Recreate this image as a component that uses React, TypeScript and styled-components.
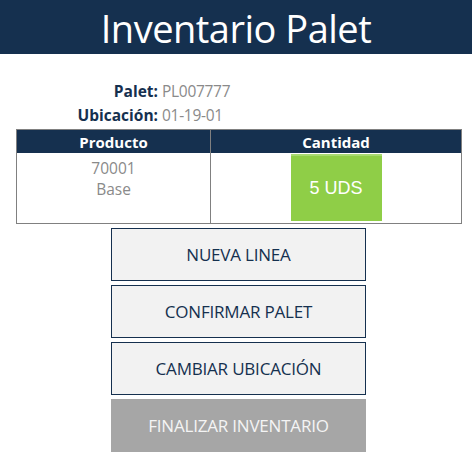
import styled, { createGlobalStyle } from 'styled-components'

const GlobalStyle = createGlobalStyle`
  body {
    margin: 0;
    background: #ffffff;
    font-family: 'Open Sans', 'Noto Sans', sans-serif;
  }
`

const Cabecera = styled.header`
  height: 54px;
  background-color: #15304f;
  color: #ffffff;
  display: flex;
  align-items: center;
  justify-content: center;
`

const Titulo = styled.h1`
  margin: 0;
  font-size: 38px;
  font-weight: 400;
  letter-spacing: -0.5px;
  line-height: 1;
  padding-top: 2px;
`

const Datos = styled.div`
  display: grid;
  grid-template-columns: 158px auto;
  column-gap: 4px;
  margin-top: 25px;
  font-size: 15.5px;
  line-height: 24px;
`

const Etiqueta = styled.span`
  text-align: right;
  font-weight: 700;
  color: #15304f;
`

const Valor = styled.span`
  color: #8a8a8a;
  letter-spacing: -0.3px;
`

const Tabla = styled.table`
  width: 446px;
  margin: 2px 0 0 16px;
  border-collapse: collapse;
  border: 1px solid #808080;
`

const CeldaCabecera = styled.th`
  background-color: #15304f;
  color: #ffffff;
  font-size: 15px;
  font-weight: 700;
  height: 23px;
  padding: 0;
  border-left: 1px solid #808080;
  &:first-child {
    border-left: none;
  }
`

const Celda = styled.td<{ $ancho?: number }>`
  width: ${p => (p.$ancho ? `${p.$ancho}px` : 'auto')};
  vertical-align: top;
  text-align: center;
  color: #8a8a8a;
  font-size: 15.5px;
  line-height: 21px;
  padding: 5px 0 0;
  height: 65px;
  border-left: 1px solid #808080;
  &:first-child {
    border-left: none;
  }
`

const CeldaCantidad = styled(Celda)`
  padding: 1px 0 2px;
`

const Cantidad = styled.div`
  width: 91px;
  height: 67px;
  margin: 0 auto;
  background-color: #8fce47;
  border-top: 2px solid #a9da72;
  box-sizing: border-box;
  color: #ffffff;
  font-family: 'Liberation Sans', Arial, sans-serif;
  font-size: 18px;
  display: flex;
  align-items: center;
  justify-content: center;
`

const Botonera = styled.div`
  display: flex;
  flex-direction: column;
  align-items: center;
  gap: 4px;
  margin-top: 4px;
  padding-left: 5px;
`

const Boton = styled.button<{ $inactivo?: boolean }>`
  width: 255px;
  height: 53px;
  box-sizing: border-box;
  border: 1px solid ${p => (p.$inactivo ? '#a6a6a6' : '#15304f')};
  background-color: ${p => (p.$inactivo ? '#a6a6a6' : '#f2f2f2')};
  color: ${p => (p.$inactivo ? '#f4f4f4' : '#15304f')};
  font-family: 'Open Sans', 'Noto Sans', sans-serif;
  font-size: 17px;
  letter-spacing: -0.2px;
  padding: 0;
  cursor: pointer;
`

export default function App() {
  return (
    <>
      <GlobalStyle />
      <Cabecera>
        <Titulo>Inventario Palet</Titulo>
      </Cabecera>
      <Datos>
        <Etiqueta>Palet:</Etiqueta>
        <Valor>PL007777</Valor>
        <Etiqueta>Ubicación:</Etiqueta>
        <Valor>01-19-01</Valor>
      </Datos>
      <Tabla>
        <thead>
          <tr>
            <CeldaCabecera>Producto</CeldaCabecera>
            <CeldaCabecera>Cantidad</CeldaCabecera>
          </tr>
        </thead>
        <tbody>
          <tr>
            <Celda $ancho={193}>
              70001
              <br />
              Base
            </Celda>
            <CeldaCantidad>
              <Cantidad>5 UDS</Cantidad>
            </CeldaCantidad>
          </tr>
        </tbody>
      </Tabla>
      <Botonera>
        <Boton>NUEVA LINEA</Boton>
        <Boton>CONFIRMAR PALET</Boton>
        <Boton>CAMBIAR UBICACIÓN</Boton>
        <Boton $inactivo>FINALIZAR INVENTARIO</Boton>
      </Botonera>
    </>
  )
}
